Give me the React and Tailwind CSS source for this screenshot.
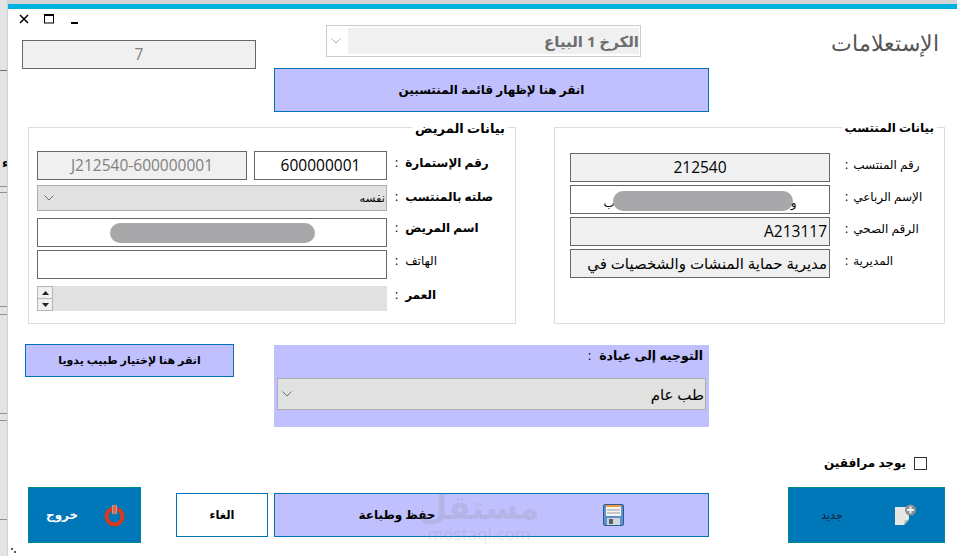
function Field({ className = "", children }) {
  return (
    <div className={`flex items-center justify-center border border-[#666666] h-[29px] text-[15.5px] ${className}`}>
      {children}
    </div>
  );
}

function Chevron({ className = "", color = "#707070" }) {
  return (
    <svg width="10" height="6" viewBox="0 0 10 6" className={className} fill="none" stroke={color} strokeWidth="1">
      <path d="M0.5 0.5 L5 5 L9.5 0.5" />
    </svg>
  );
}

function Blob({ className = "" }) {
  return <div className={`h-[20px] rounded-full bg-[#a8a8aa] ${className}`} />;
}

function PatientLabel({ bold = true, children, className = "" }) {
  return (
    <div className={`flex-1 flex items-center pl-[8px] text-[12px] whitespace-nowrap ${bold ? "font-bold" : ""} ${className}`}>
      <span className="font-normal mr-[7px]">:</span>
      <span dir="rtl">{children}</span>
    </div>
  );
}

function PatientGroup() {
  return (
    <fieldset className="relative w-[488px] h-[197px] border border-[#dddddd]">
      <div className="absolute right-[7px] -top-[8px] bg-white px-[3px] font-bold text-[13px] leading-[16px]">بيانات المريض</div>
      <div className="flex flex-col pt-[23px] pl-[8px]">
        <div className="flex items-center h-[29px] mb-[5px]">
          <Field className="w-[210px] bg-[#f0f0f0] text-[#808080]">J212540-600000001</Field>
          <Field className="w-[133px] ml-[7px] bg-white">600000001</Field>
          <PatientLabel className="-mt-[5px]">رقم الإستمارة</PatientLabel>
        </div>
        <div className="flex items-center h-[26px] mb-[7px]">
          <div dir="rtl" className="w-[350px] h-[26px] flex items-center justify-between bg-[#e1e1e1] border border-[#adadad] pl-[2px] pr-[1px] text-[11.5px]">
            <span>نفسه</span>
            <Chevron className="ml-[4px]" />
          </div>
          <PatientLabel className="-mt-[3px]">صلته بالمنتسب</PatientLabel>
        </div>
        <div className="flex items-center h-[29px] mb-[3px]">
          <Field className="w-[350px] bg-white"><Blob className="w-[205px]" /></Field>
          <PatientLabel className="-mt-[9px]">اسم المريض</PatientLabel>
        </div>
        <div className="flex items-center h-[29px] mb-[7px]">
          <Field className="w-[350px] bg-white" />
          <PatientLabel bold={false} className="-mt-[8px]">الهاتف</PatientLabel>
        </div>
        <div className="flex items-center h-[25px]">
          <div className="w-[350px] h-[25px] bg-[#e1e1e1] flex items-center">
            <div className="w-[16px] h-[25px] flex flex-col bg-[#f0f0f0] border border-[#b5b5b5]">
              <div className="flex-1 flex items-center justify-center border-b border-[#b5b5b5]">
                <svg width="7" height="4" viewBox="0 0 7 4"><path d="M3.5 0 L7 4 L0 4 Z" fill="#222" /></svg>
              </div>
              <div className="flex-1 flex items-center justify-center">
                <svg width="7" height="4" viewBox="0 0 7 4"><path d="M0 0 L7 0 L3.5 4 Z" fill="#222" /></svg>
              </div>
            </div>
          </div>
          <PatientLabel className="-mt-[7px]">العمر</PatientLabel>
        </div>
      </div>
    </fieldset>
  );
}

function TraineeRow({ label, children, box }) {
  return (
    <div className="flex items-center h-[29px] mb-[3px]">
      <div className={`w-[260px] h-[29px] border border-[#666666] flex items-center text-[15.5px] overflow-hidden ${box}`}>{children}</div>
      <div className="flex items-center pl-[15px] text-[12px] -mt-[6px] whitespace-nowrap"><span className="mr-[5px]">:</span><span dir="rtl">{label}</span></div>
    </div>
  );
}

function TraineeGroup() {
  return (
    <fieldset className="relative w-[391px] h-[197px] border border-[#dddddd] ml-[38px]">
      <div className="absolute right-[7px] -top-[8px] bg-white px-[3px] font-bold text-[12px] leading-[16px]">بيانات المنتسب</div>
      <div className="flex flex-col pt-[25px] pl-[15px]">
        <TraineeRow label="رقم المنتسب" box="bg-[#f0f0f0] justify-center">212540</TraineeRow>
        <TraineeRow label="الإسم الرباعي" box="bg-white justify-center">
          <span className="text-[12px] mt-[6px]">ب</span>
          <Blob className="w-[180px] mt-[2px] -mx-[2px]" />
          <span className="text-[12px] mt-[6px]">و</span>
        </TraineeRow>
        <TraineeRow label="الرقم الصحي" box="bg-[#f0f0f0] justify-end pr-[2px]">A213117</TraineeRow>
        <TraineeRow label="المديرية" box="bg-[#f0f0f0] justify-end pr-[2px]">
          <span dir="rtl" className="whitespace-nowrap text-[15px]">مديرية حماية المنشات والشخصيات في</span>
        </TraineeRow>
      </div>
    </fieldset>
  );
}

function PowerIcon() {
  return (
    <svg width="21" height="23" viewBox="0 0 21 23" fill="none">
      <circle cx="10.5" cy="12.5" r="8" stroke="#d9391e" strokeWidth="4" />
      <path d="M10.5 1 V10" stroke="#7fb0d0" strokeWidth="5" />
      <path d="M10.5 2 V9" stroke="#e8613f" strokeWidth="3" strokeLinecap="round" />
      <path d="M6 22.5 H15" stroke="#0d4f75" strokeWidth="1" strokeDasharray="1 2" />
    </svg>
  );
}

function DiskIcon() {
  return (
    <svg width="21" height="22" viewBox="0 0 21 22">
      <rect x="0.5" y="0.5" width="20" height="21" rx="1.5" fill="#5f8fc7" stroke="#2d5a94" />
      <rect x="3" y="1" width="15" height="2" fill="#f09a3c" />
      <rect x="3" y="3" width="15" height="9" fill="#f4f4f4" />
      <path d="M4 6 H17 M4 9 H17" stroke="#9a9a9a" strokeWidth="1" />
      <rect x="4" y="14" width="13" height="7" fill="#cfd6dc" />
      <rect x="6" y="15" width="4" height="5" fill="#52606c" />
    </svg>
  );
}

function NewIcon() {
  return (
    <svg width="22" height="22" viewBox="0 0 22 22">
      <path d="M0 3 H14 V15 L9 21 H0 Z" fill="#e6e6e2" />
      <path d="M9 21 L10 16 H14 Z" fill="#b9b9b4" />
      <circle cx="15.5" cy="6" r="5.5" fill="#8b8f93" />
      <path d="M15.5 2.5 V9.5 M12 6 H19" stroke="#f2f2f2" strokeWidth="2" />
    </svg>
  );
}

const stripLines = [
  ["top-[70px]", "bg-[#707070]"],
  ["top-[186px]", "bg-[#909090]"],
  ["top-[192px]", "bg-[#909090]"],
  ["top-[306px]", "bg-[#909090]"],
  ["top-[314px]", "bg-[#909090]"],
  ["top-[413px]", "bg-[#909090]"],
  ["top-[420px]", "bg-[#909090]"],
  ["top-[519px]", "bg-[#909090]"],
];

export default function App() {
  return (
    <div className="relative w-[957px] h-[556px] overflow-hidden bg-white flex text-black" style={{ fontFamily: '"Open Sans", "DejaVu Sans", sans-serif' }}>
      {/* desktop sliver to the left of the window */}
      <div className="relative w-[8px] h-full bg-[#e3e3e3] border-r border-[#d0d0d0] flex-none overflow-hidden">
        {stripLines.map(([top, bg]) => (
          <div key={top} className={`absolute left-0 w-full h-px ${top} ${bg}`} />
        ))}
        <div className="absolute left-[2px] top-[153px] font-bold text-[13px] leading-[18px]">ء</div>
      </div>

      <div className="flex-1 min-w-0 flex flex-col relative">
        <div className="h-[4px] bg-[#d4d4d4]" />
        <div className="h-[5px] bg-[#00b0de]" />

        {/* top row */}
        <div className="flex h-[118px]">
          <div className="w-[266px] pl-[14px] flex flex-col">
            <div className="flex items-center h-[12px] mt-[4px] -ml-[3px]">
              <svg width="10" height="10" viewBox="0 0 10 10" fill="none" stroke="#000" strokeWidth="1.5"><path d="M1 1 L9 9 M9 1 L1 9" /></svg>
              <svg width="10" height="10" viewBox="0 0 10 10" fill="none" stroke="#000" className="ml-[15px]"><rect x="0.5" y="1" width="9" height="8" strokeWidth="1" /><path d="M0 1 H10" strokeWidth="2" /></svg>
              <div className="w-[7px] h-[2px] bg-black ml-[17px] mt-[7px]" />
            </div>
            <div className="mt-[15px] w-[234px] h-[29px] border border-[#666666] bg-[#f0f0f0] text-[#808080] flex items-center justify-center text-[15.5px]">7</div>
          </div>
          <div className="w-[435px] flex flex-col">
            <div className="ml-[52px] mt-[16px] w-[315px] h-[32px] border border-[#cccccc] flex items-center">
              <Chevron className="ml-[4px] flex-none" color="#aaaaaa" />
              <div dir="rtl" className="ml-[7px] mr-[1px] flex-1 h-[26px] bg-[#f0f0f0] text-[#6e6e6e] font-bold text-[15px] leading-[26px] whitespace-nowrap">الكرخ 1 البياع</div>
            </div>
            <button dir="rtl" className="mt-[11px] h-[44px] w-[435px] bg-[#c0c0ff] border border-[#0072b8] font-bold text-[12px] flex items-center justify-center">انقر هنا لإظهار قائمة المنتسبين</button>
          </div>
          <div dir="rtl" className="flex-1 mr-[18px] text-[22px] font-extralight text-[#555555] pt-[18px] leading-[30px] whitespace-nowrap">الإستعلامات</div>
        </div>

        {/* groups */}
        <div className="flex pl-[20px] h-[217px]">
          <PatientGroup />
          <TraineeGroup />
        </div>

        {/* referral row */}
        <div className="flex items-start pl-[17px] h-[111px]">
          <button dir="rtl" className="w-[209px] h-[33px] bg-[#c0c0ff] border border-[#0072b8] font-bold text-[11px] flex items-center justify-center">انقر هنا لإختيار طبيب يدويا</button>
          <div className="ml-[40px] w-[435px] h-[82px] mt-[1px] bg-[#c0c0ff] flex flex-col">
            <div dir="rtl" className="h-[33px] pr-[6px] pt-[1px] font-bold text-[12.5px] flex gap-2 leading-[20px]">
              <span>التوجيه إلى عيادة</span><span className="font-normal text-[12px]">:</span>
            </div>
            <div dir="rtl" className="mx-[3px] h-[32px] bg-[#e1e1e1] border border-[#adadad] flex items-center justify-between pr-[1px] pl-[4px] text-[15px]">
              <span>طب عام</span>
              <Chevron />
            </div>
          </div>
        </div>

        {/* checkbox */}
        <div className="flex items-center justify-end h-[32px] pr-[30px] pb-[16px] font-bold text-[12px]" dir="ltr">
          <span dir="rtl" className="mr-[8px] whitespace-nowrap">يوجد مرافقين</span>
          <div className="w-[13px] h-[13px] border border-[#333333]" />
        </div>

        {/* bottom buttons */}
        <div className="flex items-center pl-[20px] h-[56px]">
          <button className="w-[113px] h-[56px] bg-[#0077b8] flex items-center border border-[#008a8a]">
            <span className="ml-[17px] text-white font-bold text-[12px] w-[42px] text-left">خروج</span>
            <span className="ml-[16px]"><PowerIcon /></span>
          </button>
          <button className="ml-[35px] w-[92px] h-[44px] bg-white border border-[#0072b8] font-bold text-[11.5px]">الغاء</button>
          <button className="ml-[6px] w-[435px] h-[44px] bg-[#c0c0ff] border border-[#0072b8] flex items-center">
            <span dir="rtl" className="ml-[82px] w-[80px] font-bold text-[12px] whitespace-nowrap">حفظ وطباعة</span>
            <span className="ml-[166px]"><DiskIcon /></span>
          </button>
          <button className="ml-[79px] w-[157px] h-[56px] bg-[#0077b8] border border-[#008a8a] flex items-center">
            <span className="ml-[31px] text-[11px] text-[#1a1a2e] w-[24px]">جديد</span>
            <span className="ml-[51px]"><NewIcon /></span>
          </button>
        </div>

        {/* small marks and watermark lying over the page */}
        <div className="absolute -left-[0px] bottom-[3px] flex gap-[1px] pl-[3px]">
          <div className="w-[2px] h-[2px] bg-[#555555]" />
          <div className="w-[2px] h-[2px] bg-[#555555] mt-[3px]" />
        </div>
        <div className="absolute left-[410px] top-[488px] w-[122px] text-center text-[#808080]/20 pointer-events-none">
          <div className="font-bold text-[33px] leading-[38px]">مستقل</div>
          <div className="text-[17px] leading-[16px]">mostaql.com</div>
        </div>
      </div>
    </div>
  );
}
